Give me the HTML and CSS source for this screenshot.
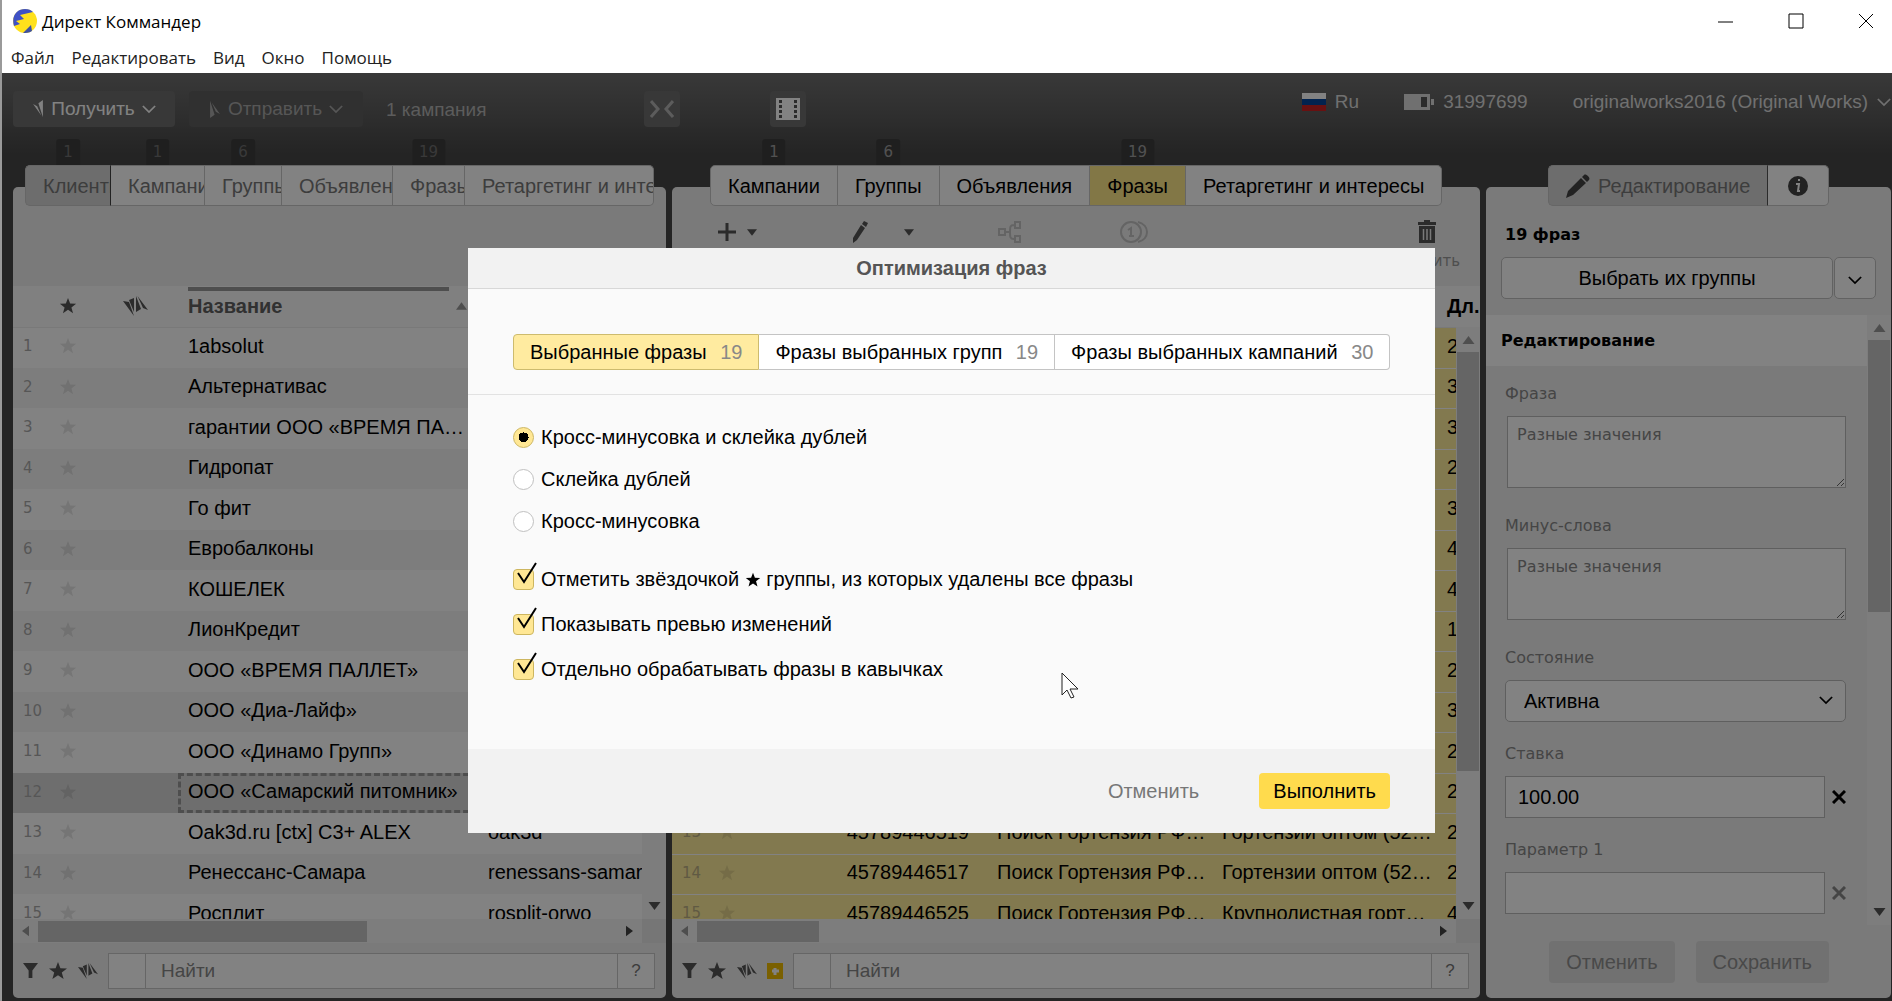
FILE: index.html
```
<!DOCTYPE html>
<html lang="ru">
<head>
    <meta charset="UTF-8">
    <meta name="viewport" content="width=device-width, initial-scale=1.0">
    <title>Директ Коммандер</title>
    <link rel="stylesheet" href="styles.css">
</head>
<body>
    <!-- Shared icons -->
    <svg class="sprite" aria-hidden="true">
        <symbol id="star" viewBox="0 0 20 20"><path d="M10 1l2.4 6.2 6.6.3-5.200 4.100 1.800 6.400L10 14.300 4.400 18l1.800-6.400L1 7.500l6.600-.3z"/></symbol>
        <symbol id="blade" viewBox="0 0 12 22"><path d="M0 5l5 2.500L10 19zM6.500 4L12 0v21z"/></symbol>
        <symbol id="blades" viewBox="0 0 25 20"><path d="M0 5l6 1 5 14zM6 4l5-2v14zM13 0v16l5-3zM14.500 0L25 14l-5-2z"/></symbol>
        <symbol id="funnel" viewBox="0 0 16 16"><path d="M0 0h16L10 8v8H6V8z"/></symbol>
        <symbol id="chevron" viewBox="0 0 16 10"><path d="M1 1l7 7 7-7" fill="none" stroke="currentColor" stroke-width="2"/></symbol>
        <symbol id="up" viewBox="0 0 12 8"><path d="M0 8l6-8 6 8z"/></symbol>
        <symbol id="down" viewBox="0 0 12 8"><path d="M0 0h12L6 8z"/></symbol>
        <symbol id="left" viewBox="0 0 8 12"><path d="M8 0v12L0 6z"/></symbol>
        <symbol id="right" viewBox="0 0 8 12"><path d="M0 0v12l8-6z"/></symbol>
        <symbol id="pencil" viewBox="0 0 24 24"><path d="M0 24l2-7L15 4l5 5L7 21zM16 3l2-2c2-2 7 3 5 5l-2 2z"/></symbol>
        <symbol id="cross" viewBox="0 0 14 14"><path d="M1 1l12 12M13 1L1 13" fill="none" stroke="currentColor" stroke-width="3"/></symbol>
    </svg>

    <header class="titlebar">
        <div class="title">
            <svg class="logo" viewBox="0 0 24 24"><circle cx="12" cy="12" r="12" fill="#ffe11d"/><path d="M1 17C-2 7 4 0 12 0c4 0 6 1 8 3L7 6l4 4-8 2 4 3z" fill="#3f51c5"/><path d="M10 24l8-8 1 6c-3 2-6 2-9 2z" fill="#3f51a0"/></svg>
            <span>Директ Коммандер</span>
        </div>
        <div class="window-buttons">
            <button aria-label="Свернуть"><svg viewBox="0 0 16 16"><path d="M0 9h15"/></svg></button>
            <button aria-label="Развернуть"><svg viewBox="0 0 16 16"><path d="M1 1h14v14H1z"/></svg></button>
            <button aria-label="Закрыть"><svg viewBox="0 0 16 16"><path d="M1 1l14 14M15 1L1 15"/></svg></button>
        </div>
    </header>
    <nav class="menu">
        <a href="#">Файл</a>
        <a href="#">Редактировать</a>
        <a href="#">Вид</a>
        <a href="#">Окно</a>
        <a href="#">Помощь</a>
    </nav>

    <div class="app">
        <div class="topbar">
            <button class="top-btn get"><svg class="blade"><use href="#blade"/></svg>Получить<svg class="chev"><use href="#chevron"/></svg></button>
            <button class="top-btn send"><svg class="blade flip"><use href="#blade"/></svg>Отправить<svg class="chev"><use href="#chevron"/></svg></button>
            <span class="campaigns">1 кампания</span>
            <button class="square-btn collapse" aria-label="Скрыть"><svg viewBox="0 0 24 18"><path d="M1 1l7 8-7 8M23 1l-7 8 7 8" fill="none" stroke="currentColor" stroke-width="3"/></svg></button>
            <button class="square-btn film" aria-label="Видео"><svg viewBox="0 0 24 22"><path fill="#fff" d="M0 0h24v22H0z"/><path d="M4.500 2v18M19.500 2v18" stroke="#555" stroke-width="3" stroke-dasharray="3 2"/></svg></button>
            <div class="account">
                <span class="lang"><svg viewBox="0 0 24 18"><path fill="#fff" d="M0 0h24v6H0z"/><path fill="#05459c" d="M0 6h24v6H0z"/><path fill="#c22" d="M0 12h24v6H0z"/></svg>Ru</span>
                <span class="units"><svg viewBox="0 0 30 16"><path fill="currentColor" d="M0 0h26v16H0zM27 5h3v6h-3z"/><path fill="#555" d="M17 3h6v10h-6z"/></svg>31997699</span>
                <span class="user">originalworks2016 (Original Works)<svg class="chev"><use href="#chevron"/></svg></span>
            </div>
        </div>

        <main class="panels">
            <section class="panel clients">
                <div class="tabs">
                    <button class="tab active"><span class="badge">1</span><span class="cut">Клиенты</span></button>
                    <button class="tab"><span class="badge">1</span><span class="cut">Кампании</span></button>
                    <button class="tab"><span class="badge">6</span><span class="cut">Группы</span></button>
                    <button class="tab"><span class="cut">Объявления</span></button>
                    <button class="tab"><span class="badge">19</span><span class="cut">Фразы</span></button>
                    <button class="tab"><span class="cut">Ретаргетинг и инте</span></button>
                </div>
                <div class="tools"></div>
                <div class="grid">
                    <table>
                        <colgroup><col class="c-num"><col class="c-star"><col class="c-mark"><col class="c-name"><col class="c-login"></colgroup>
                        <thead>
                            <tr><th></th><th><svg class="star"><use href="#star"/></svg></th><th><svg class="blades"><use href="#blades"/></svg></th><th><div class="sorted">Название<svg class="sort"><use href="#up"/></svg></div></th><th></th></tr>
                        </thead>
                        <tbody>
                            <tr><td>1</td><td><svg class="star"><use href="#star"/></svg></td><td></td><td>1absolut</td><td></td></tr>
                            <tr><td>2</td><td><svg class="star"><use href="#star"/></svg></td><td></td><td>Альтернативас</td><td></td></tr>
                            <tr><td>3</td><td><svg class="star"><use href="#star"/></svg></td><td></td><td>гарантии ООО «ВРЕМЯ ПА…</td><td></td></tr>
                            <tr><td>4</td><td><svg class="star"><use href="#star"/></svg></td><td></td><td>Гидропат</td><td></td></tr>
                            <tr><td>5</td><td><svg class="star"><use href="#star"/></svg></td><td></td><td>Го фит</td><td></td></tr>
                            <tr><td>6</td><td><svg class="star"><use href="#star"/></svg></td><td></td><td>Евробалконы</td><td></td></tr>
                            <tr><td>7</td><td><svg class="star"><use href="#star"/></svg></td><td></td><td>КОШЕЛЕК</td><td></td></tr>
                            <tr><td>8</td><td><svg class="star"><use href="#star"/></svg></td><td></td><td>ЛионКредит</td><td></td></tr>
                            <tr><td>9</td><td><svg class="star"><use href="#star"/></svg></td><td></td><td>ООО «ВРЕМЯ ПАЛЛЕТ»</td><td></td></tr>
                            <tr><td>10</td><td><svg class="star"><use href="#star"/></svg></td><td></td><td>ООО «Диа-Лайф»</td><td></td></tr>
                            <tr><td>11</td><td><svg class="star"><use href="#star"/></svg></td><td></td><td>ООО «Динамо Групп»</td><td></td></tr>
                            <tr class="selected"><td>12</td><td><svg class="star"><use href="#star"/></svg></td><td></td><td class="focus">ООО «Самарский питомник»</td><td></td></tr>
                            <tr><td>13</td><td><svg class="star"><use href="#star"/></svg></td><td></td><td>Oak3d.ru [ctx] C3+ ALEX</td><td>oak3d</td></tr>
                            <tr><td>14</td><td><svg class="star"><use href="#star"/></svg></td><td></td><td>Ренессанс-Самара</td><td>renessans-samara</td></tr>
                            <tr><td>15</td><td><svg class="star"><use href="#star"/></svg></td><td></td><td>Росплит</td><td>rosplit-orwo</td></tr>
                        </tbody>
                    </table>
                    <div class="vscroll"><svg class="arr-v"><use href="#up"/></svg><i></i><svg class="arr-v end"><use href="#down"/></svg></div>
                </div>
                <div class="hscroll"><svg class="arr-h"><use href="#left"/></svg><i></i><svg class="arr-h end"><use href="#right"/></svg><b></b></div>
                <div class="find">
                    <svg class="funnel"><use href="#funnel"/></svg>
                    <svg class="star"><use href="#star"/></svg>
                    <svg class="blades"><use href="#blades"/></svg>
                    <div class="search">
                        <button aria-label="Фильтр"></button>
                        <input type="text" placeholder="Найти" aria-label="Найти">
                        <button class="help">?</button>
                    </div>
                </div>
            </section>

            <section class="panel phrases">
                <div class="tabs">
                    <button class="tab"><span class="badge">1</span>Кампании</button>
                    <button class="tab"><span class="badge">6</span>Группы</button>
                    <button class="tab">Объявления</button>
                    <button class="tab active"><span class="badge">19</span>Фразы</button>
                    <button class="tab">Ретаргетинг и интересы</button>
                </div>
                <div class="tools">
                    <button class="tool" aria-label="Добавить"><svg width="20" height="20" viewBox="0 0 20 20"><path d="M10 1v18M1 10h18" stroke="currentColor" stroke-width="3"/></svg><svg class="caret"><use href="#down"/></svg></button>
                    <button class="tool wide" aria-label="Изменить"><svg width="15" height="22" viewBox="0 0 15 22"><path fill="currentColor" d="M0 22V17L8 4l4 3L4 19zM9 3l2-3 4 2-2 4z"/></svg><svg class="caret"><use href="#down"/></svg></button>
                    <button class="tool off nodes" aria-label="Структура"><svg class="outline" width="24" height="22" viewBox="0 0 24 22"><path d="M1 8h6v6H1zM17 1h5v6h-5zM17 15h5v6h-5zM7 11h5M16 4c-4 0-4 2-4 7s0 7 4 7"/></svg></button>
                    <button class="tool off coins" aria-label="Ставки"><svg class="outline" width="30" height="24" viewBox="0 0 30 24"><circle cx="12" cy="12" r="10"/><path d="M19 2c12 3 12 17 0 20M9 10l3-2v8M10 16h5"/></svg></button>
                    <button class="tool trash"><svg width="18" height="23" viewBox="0 0 18 23"><path d="M0 2h6V0h6v2h6v3H0zM1 6h16v17H1z"/><path d="M5.500 9v11M9 9v11M12.500 9v11" stroke="#eee" stroke-width="1.500"/></svg><span>Удалить</span></button>
                </div>
                <div class="grid">
                    <table>
                        <colgroup><col class="c-num"><col class="c-star"><col class="c-id"><col class="c-text"><col class="c-text"><col class="c-len"></colgroup>
                        <thead>
                            <tr><th></th><th></th><th></th><th></th><th></th><th>Дл.</th></tr>
                        </thead>
                        <tbody>
                            <tr><td></td><td></td><td></td><td></td><td></td><td>2</td></tr>
                            <tr><td></td><td></td><td></td><td></td><td></td><td>3</td></tr>
                            <tr><td></td><td></td><td></td><td></td><td></td><td>3</td></tr>
                            <tr><td></td><td></td><td></td><td></td><td></td><td>2</td></tr>
                            <tr><td></td><td></td><td></td><td></td><td></td><td>3</td></tr>
                            <tr><td></td><td></td><td></td><td></td><td></td><td>4</td></tr>
                            <tr><td></td><td></td><td></td><td></td><td></td><td>4</td></tr>
                            <tr><td></td><td></td><td></td><td></td><td></td><td>1</td></tr>
                            <tr><td></td><td></td><td></td><td></td><td></td><td>2</td></tr>
                            <tr><td></td><td></td><td></td><td></td><td></td><td>3</td></tr>
                            <tr><td></td><td></td><td></td><td></td><td></td><td>2</td></tr>
                            <tr><td></td><td></td><td></td><td></td><td></td><td>2</td></tr>
                            <tr><td>13</td><td><svg class="star"><use href="#star"/></svg></td><td>45789446519</td><td>Поиск Гортензия РФ…</td><td>Гортензии оптом (52…</td><td>2</td></tr>
                            <tr><td>14</td><td><svg class="star"><use href="#star"/></svg></td><td>45789446517</td><td>Поиск Гортензия РФ…</td><td>Гортензии оптом (52…</td><td>2</td></tr>
                            <tr><td>15</td><td><svg class="star"><use href="#star"/></svg></td><td>45789446525</td><td>Поиск Гортензия РФ…</td><td>Крупнолистная горт…</td><td>4</td></tr>
                        </tbody>
                    </table>
                    <div class="vscroll"><svg class="arr-v"><use href="#up"/></svg><i></i><svg class="arr-v end"><use href="#down"/></svg></div>
                </div>
                <div class="hscroll"><svg class="arr-h"><use href="#left"/></svg><i></i><svg class="arr-h end"><use href="#right"/></svg><b></b></div>
                <div class="find">
                    <svg class="funnel"><use href="#funnel"/></svg>
                    <svg class="star"><use href="#star"/></svg>
                    <svg class="blades"><use href="#blades"/></svg>
                    <svg class="plus-box" viewBox="0 0 16 16"><path fill="#f0bd00" d="M0 0h16v16H0z"/><path stroke="#fff" stroke-width="3" d="M8 5v7M5 8h7"/></svg>
                    <div class="search">
                        <button aria-label="Фильтр"></button>
                        <input type="text" placeholder="Найти" aria-label="Найти">
                        <button class="help">?</button>
                    </div>
                </div>
            </section>

            <section class="panel editor">
                <div class="tabs">
                    <button class="tab active"><svg class="pen"><use href="#pencil"/></svg>Редактирование</button>
                    <button class="tab info" aria-label="Информация"><svg width="22" height="22" viewBox="0 0 22 22"><circle cx="11" cy="11" r="10" fill="currentColor"/><path d="M9 9h3l-1 7h2M11 5h2" stroke="#fff" stroke-width="2" fill="none"/></svg></button>
                </div>
                <p class="count">19 фраз</p>
                <div class="split">
                    <button>Выбрать их группы</button>
                    <button class="more" aria-label="Ещё"><svg class="chev"><use href="#chevron"/></svg></button>
                </div>
                <div class="scroll-area">
                    <form class="fields">
                        <h2>Редактирование</h2>
                        <div class="field area">
                            <label for="phrase">Фраза</label>
                            <textarea id="phrase" placeholder="Разные значения"></textarea>
                        </div>
                        <div class="field area">
                            <label for="minus">Минус-слова</label>
                            <textarea id="minus" placeholder="Разные значения"></textarea>
                        </div>
                        <div class="field">
                            <label for="state">Состояние</label>
                            <div class="select-wrap">
                                <select id="state"><option>Активна</option></select>
                                <svg class="chev"><use href="#chevron"/></svg>
                            </div>
                        </div>
                        <div class="field">
                            <label for="bid">Ставка</label>
                            <div class="line"><input type="text" id="bid" value="100.00"><button type="button" aria-label="Очистить"><svg><use href="#cross"/></svg></button></div>
                        </div>
                        <div class="field">
                            <label for="param">Параметр 1</label>
                            <div class="line"><input type="text" id="param"><button type="button" class="dim" aria-label="Очистить"><svg><use href="#cross"/></svg></button></div>
                        </div>
                    </form>
                    <div class="vscroll"><svg class="arr-v"><use href="#up"/></svg><i></i><svg class="arr-v end"><use href="#down"/></svg></div>
                </div>
                <div class="actions">
                    <button>Отменить</button>
                    <button>Сохранить</button>
                </div>
            </section>
        </main>

        <div class="overlay">
            <div class="dialog" role="dialog" aria-labelledby="dialogTitle">
                <h1 id="dialogTitle">Оптимизация фраз</h1>
                <div class="scope">
                    <button class="active">Выбранные фразы <span>19</span></button>
                    <button>Фразы выбранных групп <span>19</span></button>
                    <button>Фразы выбранных кампаний <span>30</span></button>
                </div>
                <div class="options">
                    <label class="radio"><input type="radio" name="mode" checked>Кросс-минусовка и склейка дублей</label>
                    <label class="radio"><input type="radio" name="mode">Склейка дублей</label>
                    <label class="radio"><input type="radio" name="mode">Кросс-минусовка</label>
                    <div class="checks">
                        <label class="check"><input type="checkbox" checked><svg class="tick" viewBox="0 0 24 24"><path d="M3 11l6 9L21 1"/></svg><span>Отметить звёздочкой <svg class="star"><use href="#star"/></svg> группы, из которых удалены все фразы</span></label>
                        <label class="check"><input type="checkbox" checked><svg class="tick" viewBox="0 0 24 24"><path d="M3 11l6 9L21 1"/></svg>Показывать превью изменений</label>
                        <label class="check"><input type="checkbox" checked><svg class="tick" viewBox="0 0 24 24"><path d="M3 11l6 9L21 1"/></svg>Отдельно обрабатывать фразы в кавычках</label>
                    </div>
                </div>
                <div class="dialog-footer">
                    <button class="cancel">Отменить</button>
                    <button class="run">Выполнить</button>
                </div>
                <svg class="cursor" viewBox="0 0 18 27"><path d="M1 1v22l5-5 4 8 3-1-4-8h8z" fill="#fff" stroke="#222"/></svg>
            </div>
        </div>
    </div>
</body>
</html>
```
FILE: styles.css
```
* {
    box-sizing: border-box;
}
body {
    margin: 0;
    height: 100vh;
    display: flex;
    flex-direction: column;
    overflow: hidden;
    border-left: 2px solid #9a9a9a;
    font-family: "Liberation Sans", Arial, sans-serif;
    font-size: 20px;
    color: #000;
    background-color: #fff;
}
button, input, select, textarea {
    font: inherit;
    color: inherit;
}
button {
    border: none;
    background: none;
    padding: 0;
}
svg {
    fill: currentColor;
    flex: none;
}
.sprite {
    position: absolute;
    width: 0;
    height: 0;
}
.outline {
    fill: none;
    stroke: currentColor;
    stroke-width: 2;
}
.star {
    width: 18px;
    height: 18px;
}
.blades {
    width: 25px;
    height: 20px;
}
.chev {
    width: 14px;
    height: 9px;
}

/* window title and menu */
.titlebar {
    display: flex;
    justify-content: space-between;
    align-items: center;
    height: 42px;
    padding-left: 11px;
    font-family: "Open Sans", "Segoe UI", sans-serif;
    font-size: 17px;
}
.title {
    display: flex;
    align-items: center;
    gap: 5px;
}
.logo {
    width: 24px;
    height: 24px;
}
.window-buttons {
    display: flex;
    gap: 54px;
    padding-right: 18px;
}
.window-buttons svg {
    display: block;
    width: 16px;
    height: 16px;
    fill: none;
    stroke: #000;
}
.menu {
    display: flex;
    gap: 17px;
    height: 31px;
    padding-left: 9px;
    font-family: "Open Sans", "Segoe UI", sans-serif;
    font-size: 17px;
    line-height: 31px;
}
.menu a {
    color: #222;
    text-decoration: none;
}

/* application */
.app {
    position: relative;
    flex: 1;
    min-height: 0;
    display: flex;
    flex-direction: column;
    padding: 0 1px 3px 11px;
    background: linear-gradient(#707070, #484848 80px);
}
.topbar {
    display: flex;
    height: 114px;
    padding-top: 18px;
    font-size: 19px;
}
.top-btn, .square-btn {
    height: 36px;
    border-radius: 4px;
    background-color: #6e6e6e;
    color: #fff;
}
.top-btn {
    display: flex;
    align-items: center;
    justify-content: center;
    gap: 7px;
    width: 162px;
}
.top-btn.send {
    width: 174px;
    margin-left: 14px;
    background-color: #5e5e5e;
    color: #aaa;
}
.blade {
    width: 12px;
    height: 18px;
}
.flip {
    transform: rotate(180deg);
}
.campaigns {
    margin-left: 23px;
    width: 258px;
    line-height: 38px;
    color: #b4b4b4;
}
.square-btn {
    width: 36px;
}
.square-btn svg {
    display: block;
    width: 24px;
    margin: 0 auto;
}
.collapse {
    color: #b4b4b4;
}
.film {
    margin-left: 90px;
}
.account {
    display: flex;
    gap: 45px;
    margin-left: auto;
    line-height: 22px;
    color: #dcdcdc;
}
.account span {
    display: flex;
    align-items: center;
    align-self: flex-start;
    gap: 9px;
}
.lang svg {
    width: 24px;
}
.units svg {
    width: 30px;
}

.panels {
    flex: 1;
    min-height: 0;
    display: grid;
    grid-template-columns: 653fr 808fr 405fr;
    gap: 6px;
}
.panel {
    display: flex;
    flex-direction: column;
    min-width: 0;
    min-height: 0;
    border-radius: 5px;
    background-color: #efefef;
}
.tabs {
    display: flex;
    height: 41px;
    margin: -22px 12px 0;
}
.tab {
    position: relative;
    display: flex;
    align-items: center;
    padding: 1px 17px 0;
    border: 1px solid #c8c8c8;
    border-left-width: 0;
    background-color: #fff;
    white-space: nowrap;
}
.tab:first-child {
    border-left-width: 1px;
    border-radius: 5px 0 0 5px;
}
.tab:last-child {
    border-radius: 0 5px 5px 0;
}
.badge {
    position: absolute;
    left: 50%;
    bottom: 40px;
    transform: translateX(-50%);
    padding: 0 7px;
    border-radius: 3px 3px 0 0;
    background-color: #3e3e3e;
    color: #a0a0a0;
    font-family: "DejaVu Sans", Verdana, sans-serif;
    font-size: 15px;
    line-height: 26px;
}
.clients .tabs {
    display: grid;
    grid-template-columns: 86fr 94fr 77fr 111fr 72fr 189fr;
    color: #787878;
}
.clients .tab {
    padding-right: 0;
    min-width: 0;
}
.clients .badge {
    color: #707070;
}
.cut {
    overflow: hidden;
}
.clients .tab.active {
    background-color: #d6d6d6;
    border-right-color: #444;
}
.phrases .tabs {
    margin-left: 38px;
}
.phrases .tab.active {
    background-color: #ffe98a;
}
.editor .tabs {
    margin-left: 62px;
}
.editor .tab.active {
    gap: 8px;
    background-color: #d6d6d6;
    border-right-color: #555;
    color: #787878;
}
.editor .info {
    padding: 0 19px;
    color: #444;
}
.pen {
    width: 24px;
    height: 24px;
    color: #444;
}

.tools {
    display: flex;
    height: 80px;
    padding: 14px 0 0 45px;
    color: #555;
}
.tool {
    display: flex;
    align-items: center;
    align-self: flex-start;
    gap: 10px;
    height: 24px;
}
.caret {
    width: 10px;
    height: 9px;
}
.tool.wide {
    gap: 36px;
    margin-left: 96px;
}
.tool.off {
    color: #c4c4c4;
}
.nodes {
    margin-left: 84px;
}
.coins {
    margin-left: 97px;
}
.tool.trash {
    flex-direction: column;
    gap: 9px;
    height: auto;
    margin-left: auto;
    margin-right: 20px;
}
.trash span {
    font-family: "DejaVu Sans", Verdana, sans-serif;
    font-size: 15px;
    line-height: 18px;
    color: #999;
}

/* tables */
.grid {
    position: relative;
    flex: 1;
    min-height: 0;
    overflow: hidden;
}
table {
    width: 100%;
    table-layout: fixed;
    border-collapse: collapse;
}
.c-num {
    width: 38px;
}
.c-star {
    width: 34px;
}
.c-mark {
    width: 93px;
}
.c-name {
    width: 300px;
}
.c-id {
    width: 243px;
}
.c-text {
    width: 225px;
}
th, td {
    padding: 0 0 0 10px;
    text-align: left;
    white-space: nowrap;
}
td {
    padding-bottom: 3px;
}
thead tr {
    height: 41px;
    background-color: #fcfcfc;
}
th {
    border-bottom: 1px solid #eee;
}
.clients th {
    color: #606060;
}
tbody tr {
    height: 41px;
    background-color: #fff;
}
tbody tr:nth-child(even) {
    height: 40px;
    background-color: #f6f6f6;
}
td:first-child {
    font-family: "DejaVu Sans", Verdana, sans-serif;
    font-size: 15px;
    color: #aaa;
}
th:nth-child(2), td:nth-child(2) {
    padding-left: 8px;
}
td .star, th .star, th .blades {
    display: block;
}
td .star {
    color: rgba(0, 0, 0, 0.1);
}
th .star, th .blades {
    color: #555;
}
.clients th:nth-child(3) {
    padding-left: 38px;
}
.sorted {
    display: flex;
    align-items: center;
    justify-content: space-between;
    height: 38px;
    padding-right: 11px;
    background: linear-gradient(#999, #999) no-repeat 0 0 / 261px 4px;
}
.sort {
    width: 11px;
    height: 8px;
    color: #999;
}
tbody tr.selected {
    background-color: #d8d8d8;
}
.focus {
    outline: 3px dashed #999;
    outline-offset: -3px;
}
.phrases tbody tr, .phrases tbody tr:nth-child(even) {
    background-color: #ffee9b;
    border-bottom: 1px solid #fff;
}
.phrases td:nth-child(3) {
    text-align: right;
    padding-right: 18px;
}
.phrases td:first-child {
    color: #bdb084;
}

/* scroll bars */
.vscroll {
    position: absolute;
    top: 41px;
    right: 0;
    bottom: 0;
    display: flex;
    flex-direction: column;
    align-items: center;
    width: 24px;
    padding: 9px 0;
    background-color: #f6f6f6;
}
.vscroll i {
    width: 22px;
    height: 73%;
    margin-top: 8px;
    background-color: #c6c6c6;
}
.arr-v {
    width: 13px;
    height: 8px;
    color: #999;
}
.arr-v.end {
    margin-top: auto;
    color: #555;
}
.hscroll {
    display: flex;
    align-items: center;
    height: 24px;
    padding-left: 9px;
    background-color: #f6f6f6;
}
.hscroll i {
    width: 329px;
    height: 21px;
    margin-left: 9px;
    background-color: #c6c6c6;
}
.phrases .hscroll i {
    width: 122px;
}
.hscroll b {
    width: 24px;
    height: 24px;
    margin-left: 9px;
    background-color: #e8e8e8;
}
.arr-h {
    width: 7px;
    height: 12px;
    color: #999;
}
.arr-h.end {
    margin-left: auto;
    color: #444;
}

.find {
    display: flex;
    align-items: center;
    gap: 10px;
    height: 55px;
    padding: 0 11px 0 10px;
    color: #555;
}
.funnel {
    width: 15px;
    height: 15px;
}
.find .star {
    width: 20px;
    height: 20px;
}
.find .blades {
    width: 20px;
    height: 18px;
}
.plus-box {
    width: 16px;
    height: 16px;
}
.search {
    flex: 1;
    display: flex;
    height: 36px;
    border: 1px solid #c8c8c8;
    background-color: #fff;
}
.search button {
    width: 36px;
    font-size: 17px;
    color: #777;
}
.search input {
    flex: 1;
    min-width: 0;
    padding: 0 15px;
    border: 1px solid #c8c8c8;
    border-width: 0 1px;
    background: none;
    font-size: 19px;
}
::placeholder {
    color: #888;
    opacity: 1;
}

/* right column */
.count {
    margin: 19px 0 12px 19px;
    font: bold 16px/20px "DejaVu Sans", Verdana, sans-serif;
}
.split {
    display: flex;
    gap: 1px;
    height: 42px;
    padding: 0 15px;
}
.split button {
    flex: 1;
    border: 1px solid #c0c0c0;
    border-radius: 5px;
    background-color: #fff;
}
.split .more {
    flex: none;
    width: 42px;
}
.scroll-area {
    position: relative;
    flex: 1;
    min-height: 0;
    margin-top: 16px;
    overflow: hidden;
}
.scroll-area .vscroll {
    top: 0;
}
.scroll-area .vscroll i {
    height: 272px;
}
.fields {
    padding-right: 24px;
}
.fields h2 {
    margin: 0 0 18px;
    padding-left: 15px;
    background-color: #fff;
    font: bold 16px/51px "DejaVu Sans", Verdana, sans-serif;
}
.field {
    margin: 0 21px 22px 19px;
}
.field.area {
    margin-bottom: 28px;
}
.field label {
    display: block;
    margin-bottom: 12px;
    font: 16px/20px "DejaVu Sans", Verdana, sans-serif;
    color: #888;
}
.field textarea {
    display: block;
    width: calc(100% - 2px);
    height: 72px;
    margin-left: 2px;
    padding: 7px 9px;
    border: 1px solid #bbb;
    font: 16px/22px "DejaVu Sans", Verdana, sans-serif;
    resize: vertical;
}
.select-wrap {
    position: relative;
}
.select-wrap select {
    display: block;
    width: 100%;
    height: 42px;
    padding: 0 18px;
    border: 1px solid #bbb;
    border-radius: 5px;
    background-color: #fff;
    appearance: none;
}
.select-wrap .chev {
    position: absolute;
    right: 13px;
    top: 16px;
}
.line {
    display: flex;
    align-items: center;
    gap: 7px;
}
.line input {
    flex: 1;
    min-width: 0;
    height: 42px;
    padding: 0 12px;
    border: 1px solid #bbb;
    background-color: #fff;
}
.line svg {
    display: block;
    width: 14px;
    height: 14px;
}
.line .dim {
    color: #888;
}
.actions {
    display: flex;
    justify-content: flex-end;
    gap: 21px;
    padding: 16px 62px 15px 0;
}
.actions button {
    height: 42px;
    padding: 0 17px;
    border-radius: 4px;
    background-color: #dedede;
    color: #909090;
}

/* dialog */
.overlay {
    position: absolute;
    inset: 0;
    padding-top: 175px;
    padding-left: 9px;
    background-color: rgba(0, 0, 0, 0.49);
}
.dialog {
    position: relative;
    width: 967px;
    max-width: 100%;
    margin: 0 auto;
    background-color: #fafafa;
}
.dialog h1 {
    margin: 0;
    border-bottom: 1px solid #d8d8d8;
    background-color: #f2f2f2;
    font-size: 20px;
    line-height: 40px;
    text-align: center;
    color: #555;
}
.scope {
    display: flex;
    padding: 45px 45px 24px;
    border-bottom: 1px solid #e2e2e2;
}
.scope button {
    flex: auto;
    height: 36px;
    padding: 0 16px;
    border: 1px solid #c4c4c4;
    border-left-width: 0;
    background-color: #fff;
    white-space: nowrap;
}
.scope button:first-child {
    border-left-width: 1px;
    border-radius: 4px 0 0 4px;
}
.scope button:last-child {
    border-radius: 0 4px 4px 0;
}
.scope .active {
    border-color: #cdbb6e;
    background-color: #ffeba0;
}
.scope span {
    margin-left: 8px;
    color: #888;
}
.options {
    padding: 32px 45px 69px;
}
.radio, .check {
    position: relative;
    display: flex;
    align-items: center;
    gap: 7px;
    height: 21px;
    white-space: nowrap;
}
.radio {
    margin-bottom: 21px;
}
.radio input, .check input {
    appearance: none;
    width: 21px;
    height: 21px;
    margin: 0;
    border: 1px solid #c0c0c0;
    border-radius: 50%;
    background-color: #fff;
}
.radio input:checked {
    border-color: #cdb65f;
    background: radial-gradient(circle, #000 0 5px, #ffe794 5px);
}
.checks {
    display: flex;
    flex-direction: column;
    gap: 24px;
    padding-top: 16px;
}
.check input {
    border-color: #cdb65f;
    border-radius: 4px;
    background-color: #ffe794;
}
.check .star {
    width: 16px;
    height: 16px;
    vertical-align: -2px;
}
.tick {
    position: absolute;
    left: 2px;
    bottom: 4px;
    width: 24px;
    height: 24px;
    fill: none;
    stroke: #000;
    stroke-width: 2;
}
.dialog-footer {
    display: flex;
    justify-content: flex-end;
    gap: 60px;
    padding: 24px 45px;
    background-color: #f2f2f2;
}
.dialog-footer .cancel {
    color: #777;
}
.dialog-footer .run {
    height: 36px;
    padding: 0 14px;
    border-radius: 4px;
    background-color: #ffdb4d;
}
.cursor {
    position: absolute;
    left: 593px;
    top: 424px;
    width: 18px;
    height: 27px;
}
```
